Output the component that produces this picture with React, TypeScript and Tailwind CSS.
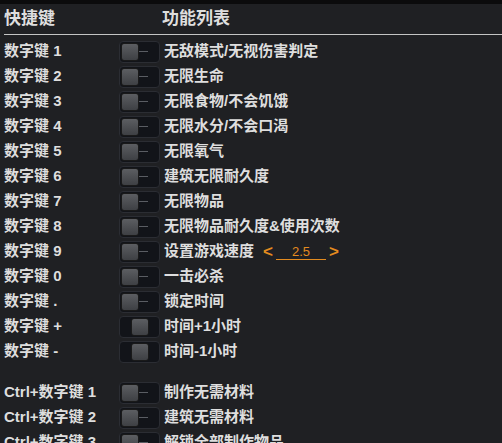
import React from "react";

type Row = { key: string; label: string; on?: boolean; speed?: string };

const numRows: Row[] = [
  { key: "数字键 1", label: "无敌模式/无视伤害判定" },
  { key: "数字键 2", label: "无限生命" },
  { key: "数字键 3", label: "无限食物/不会饥饿" },
  { key: "数字键 4", label: "无限水分/不会口渴" },
  { key: "数字键 5", label: "无限氧气" },
  { key: "数字键 6", label: "建筑无限耐久度" },
  { key: "数字键 7", label: "无限物品" },
  { key: "数字键 8", label: "无限物品耐久度&使用次数" },
  { key: "数字键 9", label: "设置游戏速度", speed: "2.5" },
  { key: "数字键 0", label: "一击必杀" },
  { key: "数字键 .", label: "锁定时间" },
  { key: "数字键 +", label: "时间+1小时", on: true },
  { key: "数字键 -", label: "时间-1小时", on: true },
];

const ctrlRows: Row[] = [
  { key: "Ctrl+数字键 1", label: "制作无需材料" },
  { key: "Ctrl+数字键 2", label: "建筑无需材料" },
  { key: "Ctrl+数字键 3", label: "解锁全部制作物品" },
];

function Toggle({ on }: { on?: boolean }) {
  return (
    <div className="relative w-[41px] h-[22px] rounded-[4px] bg-[#121419] border border-[#2b2d33] shrink-0">
      {!on && <div className="absolute left-[19px] top-[9px] w-[9px] h-[1px] bg-[#5a5d63]" />}
      <div
        className={`absolute top-[1px] w-[18px] h-[18px] rounded-[3px] border border-[#1a1a1a] bg-gradient-to-b from-[#5c5e62] to-[#3e4044] ${
          on ? "left-[11px]" : "left-[1px]"
        }`}
      />
    </div>
  );
}

function Speed({ value }: { value: string }) {
  return (
    <div className="flex items-center ml-[9px] text-[#e38b1f]">
      <span className="text-[17px] font-bold">&lt;</span>
      <span className="w-[50px] mx-[3px] text-center text-[13px] font-normal leading-[15px] border-b border-[#e38b1f]">
        {value}
      </span>
      <span className="text-[17px] font-bold">&gt;</span>
    </div>
  );
}

function HotkeyRow({ row }: { row: Row }) {
  return (
    <div className="flex items-center h-[25px]">
      <div className="w-[119px] pl-[4px] shrink-0">{row.key}</div>
      <Toggle on={row.on} />
      <div className="ml-[4px]">{row.label}</div>
      {row.speed && <Speed value={row.speed} />}
    </div>
  );
}

export default function App() {
  return (
    <div
      className="w-[502px] h-[443px] overflow-hidden bg-[#1f2023] border-t-[4px] border-[#0b0b0c] text-[#dedede] text-[15px] font-bold"
      style={{ fontFamily: '"Liberation Sans", "Noto Sans CJK SC", sans-serif' }}
    >
      <div className="flex items-center h-[31px] ml-[4px] border-b border-[#c4c4c4] text-[17px]">
        <div className="w-[158px]">快捷键</div>
        <div>功能列表</div>
      </div>
      <div className="pt-[4px]">
        {numRows.map((r) => (
          <HotkeyRow key={r.key} row={r} />
        ))}
        <div className="h-[16px]" />
        {ctrlRows.map((r) => (
          <HotkeyRow key={r.key} row={r} />
        ))}
      </div>
    </div>
  );
}
